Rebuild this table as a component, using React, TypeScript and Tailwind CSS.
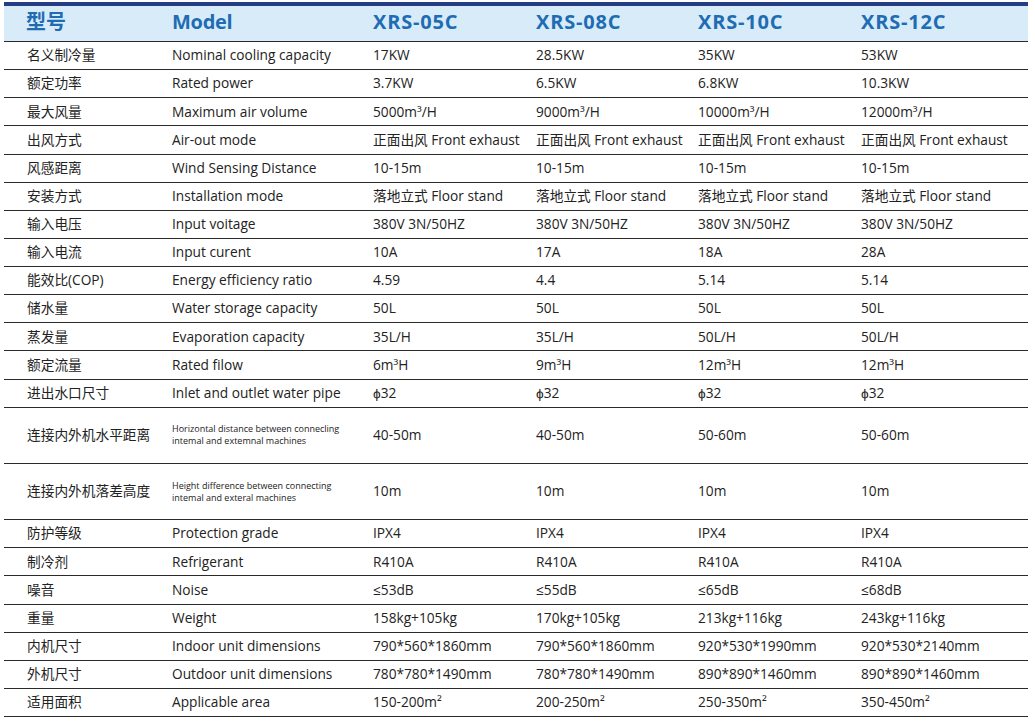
const models = ['XRS-05C', 'XRS-08C', 'XRS-10C', 'XRS-12C'];

type Row = { cn: string; en: string; vals: string[]; tall?: boolean };

const rows: Row[] = [
  { cn: '名义制冷量', en: 'Nominal cooling capacity', vals: ['17KW', '28.5KW', '35KW', '53KW'] },
  { cn: '额定功率', en: 'Rated power', vals: ['3.7KW', '6.5KW', '6.8KW', '10.3KW'] },
  { cn: '最大风量', en: 'Maximum air volume', vals: ['5000m³/H', '9000m³/H', '10000m³/H', '12000m³/H'] },
  { cn: '出风方式', en: 'Air-out mode', vals: ['正面出风 Front exhaust', '正面出风 Front exhaust', '正面出风 Front exhaust', '正面出风 Front exhaust'] },
  { cn: '风感距离', en: 'Wind Sensing Distance', vals: ['10-15m', '10-15m', '10-15m', '10-15m'] },
  { cn: '安装方式', en: 'Installation mode', vals: ['落地立式 Floor stand', '落地立式 Floor stand', '落地立式 Floor stand', '落地立式 Floor stand'] },
  { cn: '输入电压', en: 'Input voitage', vals: ['380V 3N/50HZ', '380V 3N/50HZ', '380V 3N/50HZ', '380V 3N/50HZ'] },
  { cn: '输入电流', en: 'Input curent', vals: ['10A', '17A', '18A', '28A'] },
  { cn: '能效比(COP)', en: 'Energy efficiency ratio', vals: ['4.59', '4.4', '5.14', '5.14'] },
  { cn: '储水量', en: 'Water storage capacity', vals: ['50L', '50L', '50L', '50L'] },
  { cn: '蒸发量', en: 'Evaporation capacity', vals: ['35L/H', '35L/H', '50L/H', '50L/H'] },
  { cn: '额定流量', en: 'Rated filow', vals: ['6m³H', '9m³H', '12m³H', '12m³H'] },
  { cn: '进出水口尺寸', en: 'Inlet and outlet water pipe', vals: ['ϕ32', 'ϕ32', 'ϕ32', 'ϕ32'] },
  { cn: '连接内外机水平距离', en: 'Horizontal distance between connecling\nintemal and extemnal machines', vals: ['40-50m', '40-50m', '50-60m', '50-60m'], tall: true },
  { cn: '连接内外机落差高度', en: 'Height difference between connecting\nintemal and exteral machines', vals: ['10m', '10m', '10m', '10m'], tall: true },
  { cn: '防护等级', en: 'Protection grade', vals: ['IPX4', 'IPX4', 'IPX4', 'IPX4'] },
  { cn: '制冷剂', en: 'Refrigerant', vals: ['R410A', 'R410A', 'R410A', 'R410A'] },
  { cn: '噪音', en: 'Noise', vals: ['≤53dB', '≤55dB', '≤65dB', '≤68dB'] },
  { cn: '重量', en: 'Weight', vals: ['158kg+105kg', '170kg+105kg', '213kg+116kg', '243kg+116kg'] },
  { cn: '内机尺寸', en: 'Indoor unit dimensions', vals: ['790*560*1860mm', '790*560*1860mm', '920*530*1990mm', '920*530*2140mm'] },
  { cn: '外机尺寸', en: 'Outdoor unit dimensions', vals: ['780*780*1490mm', '780*780*1490mm', '890*890*1460mm', '890*890*1460mm'] },
  { cn: '适用面积', en: 'Applicable area', vals: ['150-200m²', '200-250m²', '250-350m²', '350-450m²'] },
];

const grid = 'grid grid-cols-[168px_201px_163px_162px_163px_167px]';

export default function App() {
  return (
    <div
      className="min-h-screen bg-white pt-[2px] pl-[4px] text-[#222] [font-family:'Open_Sans','Noto_Sans_CJK_SC',sans-serif]"
    >
      <div className="w-[1024px]">
        {/* header */}
        <div className="h-[4px] bg-[#243d85]" />
        <div className={`${grid} h-[36px] items-center pb-[3px] bg-[#d7ecf8] border-b border-[#2a2a2a] text-[20px] font-bold text-[#1f6cb4]`}>
          <div className="pl-[22px]">型号</div>
          <div className="tracking-[-0.3px]">Model</div>
          {models.map((m) => (
            <div key={m} className="tracking-[0.8px]">{m}</div>
          ))}
        </div>

        {/* spec rows */}
        {rows.map((r) => (
          <div
            key={r.cn}
            className={`${grid} items-center border-b border-[#2a2a2a] text-[13.7px] ${r.tall ? 'h-[56.25px]' : 'h-[28.125px]'}`}
          >
            <div className="pl-[23px]">{r.cn}</div>
            {r.tall ? (
              <div className="text-[9px] leading-[12px] whitespace-pre-line">{r.en}</div>
            ) : (
              <div>{r.en}</div>
            )}
            {r.vals.map((v, i) => (
              <div key={i}>{v}</div>
            ))}
          </div>
        ))}
      </div>
    </div>
  );
}
